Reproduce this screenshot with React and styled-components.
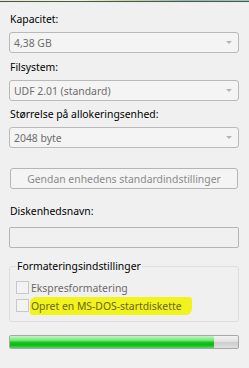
import React from 'react';
import styled, { createGlobalStyle } from 'styled-components';

const GlobalStyle = createGlobalStyle`
  html, body {
    margin: 0;
    padding: 0;
    background: #f0f0f0;
  }
  body {
    font-family: "Noto Sans", "Liberation Sans", sans-serif;
    font-size: 10.4px;
    color: #000;
  }
`;

const Window = styled.div`
  width: 249px;
  height: 368px;
  background: #f0f0f0;
  overflow: hidden;
  display: flex;
  flex-direction: column;
`;

const FrameEdge = styled.div`
  height: 3px;
  background:
    linear-gradient(to bottom, transparent 0, transparent 1px, #4a5a50 1px, #4a5a50 2px, #e8ece6 2px),
    linear-gradient(to right, #e6e2cc 0%, #f4f2dc 30%, #cfd39a 50%, #b8c7b0 62%, #8fb7b2 75%, #9cc4c2 100%);
`;

const Body = styled.div`
  display: flex;
  flex-direction: column;
  padding: 0 10px 0 9px;
`;

const Label = styled.div`
  line-height: 14px;
  height: 14px;
  margin-top: ${p => p.top}px;
  margin-bottom: ${p => p.gap}px;
  padding-left: 1px;
  white-space: nowrap;
`;

const Combo = styled.div`
  height: 19px;
  border: 1px solid #b9b9b9;
  border-radius: 3px;
  background: #f4f4f4;
  display: flex;
  align-items: center;
  justify-content: space-between;
  padding: 0 6px 0 4px;
  color: #6d6d6d;
`;

const Arrow = styled.span`
  width: 0;
  height: 0;
  border-left: 3px solid transparent;
  border-right: 3px solid transparent;
  border-top: 3px solid #b4b4b4;
`;

const Button = styled.div`
  height: 19px;
  margin: 20px 1px 0 1px;
  border: 1px solid #b5b5b5;
  border-radius: 3px;
  background: #f4f4f4;
  color: #8a8a8a;
  display: flex;
  align-items: center;
  justify-content: center;
  white-space: nowrap;
`;

const TextBox = styled.div`
  height: 19px;
  border: 1px solid #b4b4b4;
  border-radius: 2px;
  background: #f0f0f0;
`;

const Group = styled.fieldset`
  margin: 11px 0 0 0;
  padding: 8px 6px 9px 6px;
  border: 1px solid #dcdfe2;
  border-radius: 3px;
  display: flex;
  flex-direction: column;
  gap: 5px;
`;

const Legend = styled.legend`
  padding: 0 1px;
  margin-left: 0;
  line-height: 14px;
`;

const CheckRow = styled.div`
  display: flex;
  align-items: center;
  gap: 2px;
  height: 13px;
`;

const Box = styled.span`
  width: 11px;
  height: 11px;
  border: 1px solid #c8c8c8;
  background: #f3f3f3;
  flex-shrink: 0;
`;

const CheckText = styled.span`
  color: ${p => (p.marked ? '#66661c' : '#6a6a6a')};
  background: ${p => (p.marked ? '#f2f21c' : 'transparent')};
  border-radius: ${p => (p.marked ? '6px 3px 6px 3px' : '0')};
  padding: ${p => (p.marked ? '2px 10px 2px 1px' : '0')};
  margin-left: ${p => (p.marked ? '-1px' : '0')};
  white-space: nowrap;
  line-height: 14px;
`;

const Progress = styled.div`
  height: 12px;
  margin-top: 13px;
  border: 1px solid #a7a7a7;
  border-radius: 2px;
  background: linear-gradient(to bottom, #f3f3f3 0%, #e2e2e2 45%, #cdcdcd 55%, #e0e0e0 100%);
  overflow: hidden;
  display: flex;
`;

const Fill = styled.div`
  height: 100%;
  background: linear-gradient(to bottom, #c4f6c4 0%, #7ae67a 35%, #10c51a 55%, #0cb814 75%, #4fd65a 100%);
`;

const Combos = [
  { label: 'Kapacitet:', value: '4,38 GB', top: 9 },
  { label: 'Filsystem:', value: 'UDF 2.01 (standard)', top: 7 },
  { label: 'Størrelse på allokeringsenhed:', value: '2048 byte', top: 6 },
];

export default function App() {
  return (
    <Window>
      <GlobalStyle />
      <FrameEdge />
      <Body>
        {Combos.map(c => (
          <React.Fragment key={c.label}>
            <Label top={c.top} gap={6}>{c.label}</Label>
            <Combo>
              <span>{c.value}</span>
              <Arrow />
            </Combo>
          </React.Fragment>
        ))}
        <Button>Gendan enhedens standardindstillinger</Button>
        <Label top={15} gap={9}>Diskenhedsnavn:</Label>
        <TextBox />
        <Group>
          <Legend>Formateringsindstillinger</Legend>
          <CheckRow>
            <Box />
            <CheckText>Ekspresformatering</CheckText>
          </CheckRow>
          <CheckRow>
            <Box />
            <CheckText marked>Opret en MS-DOS-startdiskette</CheckText>
          </CheckRow>
        </Group>
        <Progress>
          <Fill style={{ width: `${(204 / 228) * 100}%` }} />
        </Progress>
      </Body>
    </Window>
  );
}
